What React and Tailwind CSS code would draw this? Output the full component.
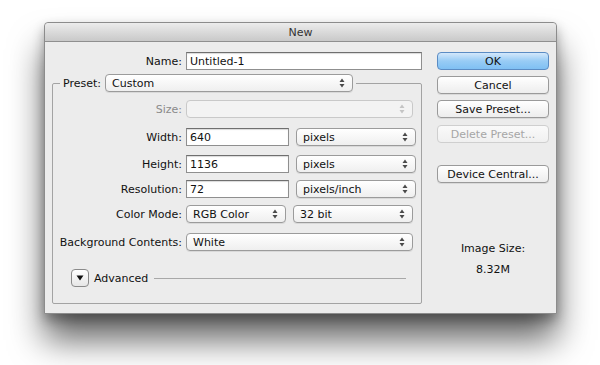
import React from 'react';

const font = { fontFamily: '"DejaVu Sans", "Liberation Sans", sans-serif' };

function Arrows({ disabled }) {
  return (
    <svg width="6" height="10" viewBox="0 0 6 10" className="shrink-0">
      <path d="M3 0.5 L5.5 4 L0.5 4 Z" fill={disabled ? '#c4c4c4' : '#4a4a4a'} />
      <path d="M3 9.5 L5.5 6 L0.5 6 Z" fill={disabled ? '#c4c4c4' : '#4a4a4a'} />
    </svg>
  );
}

function Select({ value, width, disabled }) {
  return (
    <div
      className={`h-[18px] flex items-center justify-between pl-[6px] pr-[7px] rounded-[4px] border ${
        disabled
          ? 'border-[#c9c9c9] bg-[#f3f3f3]'
          : 'border-[#9b9b9b] bg-gradient-to-b from-white to-[#efefef] shadow-[0_1px_0_rgba(0,0,0,0.08)]'
      }`}
      style={{ width }}
    >
      <span className="text-[11px] leading-none text-[#111]">{value}</span>
      <Arrows disabled={disabled} />
    </div>
  );
}

function Input({ value, width }) {
  return (
    <div
      className="h-[18px] flex items-center px-[3px] bg-white border border-[#8f8f8f] border-t-[#6f6f6f] shadow-[inset_0_1px_1px_rgba(0,0,0,0.15)]"
      style={{ width }}
    >
      <span className="text-[11px] leading-none text-[#111]">{value}</span>
    </div>
  );
}

function Row({ label, children, className = '', muted }) {
  return (
    <div className={`flex items-center ${className}`}>
      <div className={`w-[129px] text-right text-[11px] leading-none ${muted ? 'text-[#8a8a8a]' : 'text-[#111]'}`}>
        {label}
      </div>
      <div className="ml-[4px] flex items-center gap-[7px]">{children}</div>
    </div>
  );
}

function Button({ children, primary, disabled, className = '' }) {
  return (
    <div
      className={`h-[18px] w-[112px] flex items-center justify-center rounded-[4px] border text-[11px] leading-none ${
        primary
          ? 'border-[#5b8cc4] bg-gradient-to-b from-[#d3e8fb] via-[#98ccf5] to-[#7fc0f3] text-[#111]'
          : disabled
          ? 'border-[#cfcfcf] bg-gradient-to-b from-[#fafafa] to-[#f0f0f0] text-[#a6a6a6]'
          : 'border-[#9a9a9a] bg-gradient-to-b from-white to-[#ededed] text-[#111] shadow-[0_1px_0_rgba(0,0,0,0.08)]'
      } ${className}`}
    >
      {children}
    </div>
  );
}

export default function App() {
  return (
    <div className="w-[600px] h-[365px] bg-white pt-[22px] pl-[44px] overflow-hidden" style={font}>
      <div className="w-[513px] h-[292px] bg-[#ececec] border border-[#8c8c8c] rounded-t-[4px] shadow-[0_26px_34px_rgba(0,0,0,0.6),0_6px_12px_rgba(0,0,0,0.3)] flex flex-col">
        {/* title bar */}
        <div className="h-[19px] shrink-0 rounded-t-[4px] bg-gradient-to-b from-[#ececec] to-[#c9c9c9] border-b border-[#8f8f8f] flex items-center justify-center">
          <span className="text-[11px] leading-none text-[#333]">New</span>
        </div>

        <div className="flex">
          {/* left */}
          <div className="w-[378px] pl-[7px]">
            <div className="flex items-center mt-[10px]">
              <div className="w-[130px] text-right text-[11px] leading-none text-[#111]">Name:</div>
              <div className="ml-[4px]">
                <Input value="Untitled-1" width="236px" />
              </div>
            </div>

            <fieldset className="mt-[4px] w-[370px] h-[230px] border border-[#a3a3a3] rounded-[2px]">
              <legend className="ml-[7px] px-[3px] flex items-center">
                <span className="text-[11px] leading-none text-[#111] mr-[4px]">Preset:</span>
                <Select value="Custom" width="248px" />
              </legend>

              <Row label="Size:" muted className="mt-[8px]">
                <Select value="" width="227px" disabled />
              </Row>
              <Row label="Width:" className="mt-[10px]">
                <Input value="640" width="103px" />
                <Select value="pixels" width="120px" />
              </Row>
              <Row label="Height:" className="mt-[9px]">
                <Input value="1136" width="103px" />
                <Select value="pixels" width="120px" />
              </Row>
              <Row label="Resolution:" className="mt-[7px]">
                <Input value="72" width="103px" />
                <Select value="pixels/inch" width="120px" />
              </Row>
              <Row label="Color Mode:" className="mt-[7px]">
                <Select value="RGB Color" width="100px" />
                <Select value="32 bit" width="120px" />
              </Row>
              <Row label="Background Contents:" className="mt-[10px]">
                <Select value="White" width="227px" />
              </Row>

              <div className="flex items-center mt-[18px] ml-[18px]">
                <div className="w-[18px] h-[18px] rounded-[4px] border border-[#8a8a8a] bg-gradient-to-b from-white to-[#e6e6e6] flex items-center justify-center">
                  <svg width="8" height="6" viewBox="0 0 8 6">
                    <path d="M0.5 0.5 L7.5 0.5 L4 5.5 Z" fill="#111" />
                  </svg>
                </div>
                <span className="ml-[5px] text-[11px] leading-none text-[#111]">Advanced</span>
                <div className="ml-[6px] w-[252px] h-px bg-[#a8a8a8]" />
              </div>
            </fieldset>
          </div>

          {/* right */}
          <div className="ml-[14px] w-[112px] flex flex-col">
            <Button primary className="mt-[10px]">OK</Button>
            <Button className="mt-[6px]">Cancel</Button>
            <Button className="mt-[6px]">Save Preset...</Button>
            <Button disabled className="mt-[7px]">Delete Preset...</Button>
            <Button className="mt-[22px]">Device Central...</Button>
            <div className="mt-[60px] text-center text-[11px] leading-none text-[#111]">Image Size:</div>
            <div className="mt-[10px] text-center text-[11px] leading-none text-[#111]">8.32M</div>
          </div>
        </div>
      </div>
    </div>
  );
}
